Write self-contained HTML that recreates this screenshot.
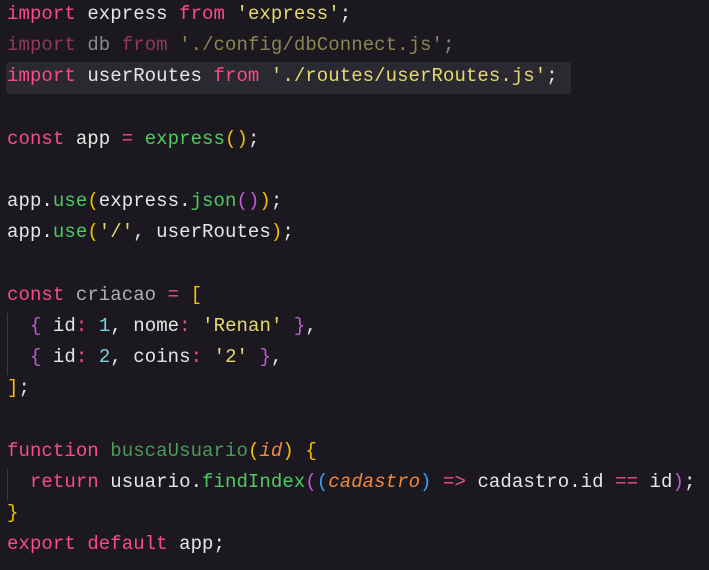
<html><head><style>
body{margin:0;background:#1b1820;width:709px;height:570px;overflow:hidden;position:relative}
pre{margin:0;position:absolute;left:7px;top:-1px;font-family:"Liberation Mono",monospace;font-size:19px;letter-spacing:0.07px;line-height:31.2px;color:#e8e6e3;white-space:pre}
.k{color:#fb4b85}.s{color:#e6d96e}.g{color:#4ecb5f}.y{color:#f2c100}.p{color:#c05ad6}.b{color:#3a9ef0}
.n{color:#7fd4d8}.o{color:#fb4b85}.i{font-style:italic;color:#f08a3e}.fg{color:#4a9a5a}.c{color:#b0adb5}
.dk{color:#93385f}.dv{color:#8a8890}.ds{color:#8d8554}.dw{color:#8a8890}
.hl{position:absolute;left:6px;top:62px;width:565px;height:32px;background:#2a2830;border-radius:3px}
.gl{position:absolute;left:7px;width:1px;background:#3a3840}
</style></head><body>
<div class="hl"></div>
<div class="gl" style="top:313px;height:62px"></div>
<div class="gl" style="top:469px;height:31px"></div>
<pre><span class="k">import</span> express <span class="k">from</span> <span class="s">'express'</span>;
<span class="dk">import</span> <span class="dv">db</span> <span class="dk">from</span> <span class="ds">'./config/dbConnect.js'</span><span class="dw">;</span>
<span class="k">import</span> userRoutes <span class="k">from</span> <span class="s">'./routes/userRoutes.js'</span>;

<span class="k">const</span> app <span class="o">=</span> <span class="g">express</span><span class="y">()</span>;

app.<span class="g">use</span><span class="y">(</span>express.<span class="g">json</span><span class="p">()</span><span class="y">)</span>;
app.<span class="g">use</span><span class="y">(</span><span class="s">'/'</span>, userRoutes<span class="y">)</span>;

<span class="k">const</span> <span class="c">criacao</span> <span class="o">=</span> <span class="y">[</span>
  <span class="p">{</span> id<span class="o">:</span> <span class="n">1</span>, nome<span class="o">:</span> <span class="s">'Renan'</span> <span class="p">}</span>,
  <span class="p">{</span> id<span class="o">:</span> <span class="n">2</span>, coins<span class="o">:</span> <span class="s">'2'</span> <span class="p">}</span>,
<span class="y">]</span>;

<span class="k">function</span> <span class="fg">buscaUsuario</span><span class="y">(</span><span class="i">id</span><span class="y">)</span> <span class="y">{</span>
  <span class="k">return</span> usuario.<span class="g">findIndex</span><span class="p">(</span><span class="b">(</span><span class="i">cadastro</span><span class="b">)</span> <span class="o">=&gt;</span> cadastro.id <span class="o">==</span> id<span class="p">)</span>;
<span class="y">}</span>
<span class="k">export</span> <span class="k">default</span> app;
</pre>
</body></html>
